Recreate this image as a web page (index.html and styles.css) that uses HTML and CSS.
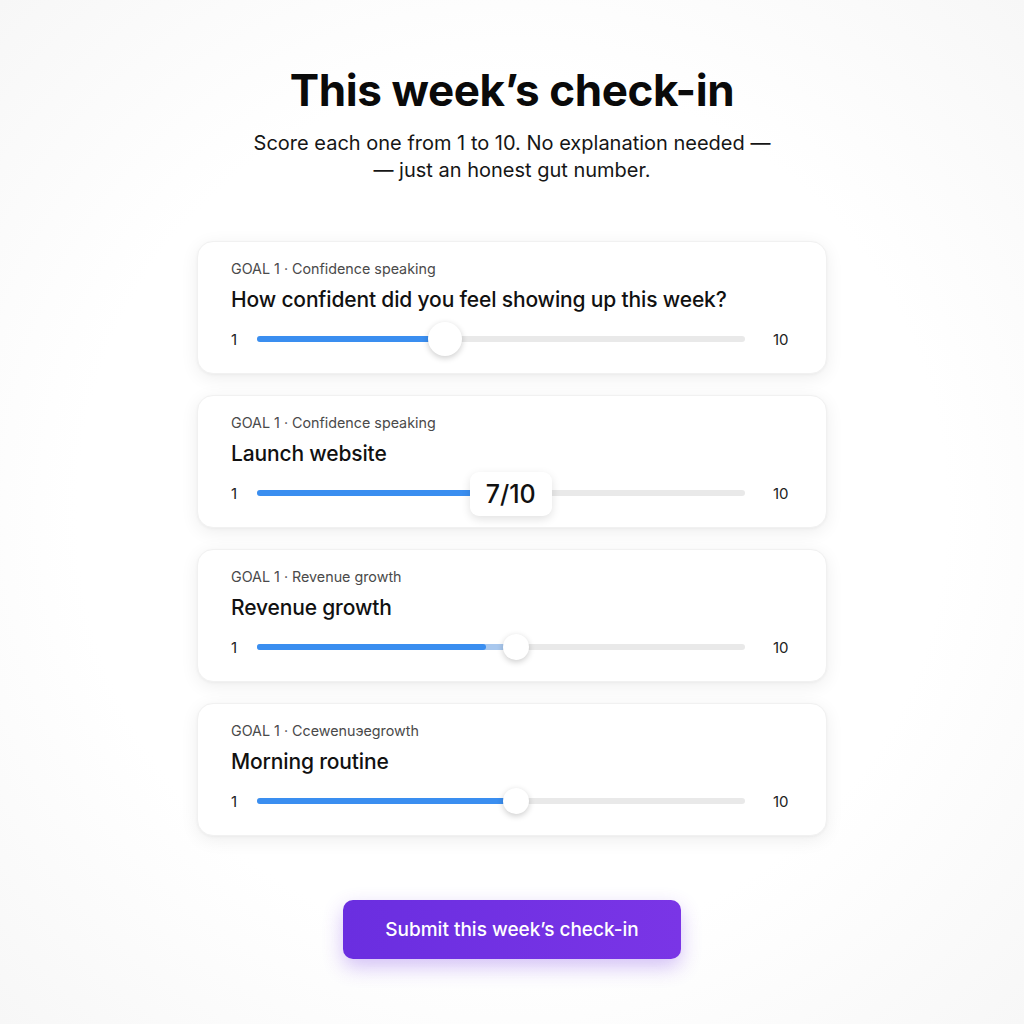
FILE: index.html
```html
<!DOCTYPE html>
<html lang="en">
<head>
    <meta charset="UTF-8">
    <meta name="viewport" content="width=device-width, initial-scale=1.0">
    <title>This week's check-in</title>
    <link rel="stylesheet" href="styles.css">
</head>
<body>
    <div class="page">
        <h1>This week’s check-in</h1>
        <p class="intro">Score each one from 1 to 10. No explanation needed —<br>— just an honest gut number.</p>

        <div class="goal-list">
            <div class="goal-card">
                <div class="goal-label">GOAL 1 · Confidence speaking</div>
                <div class="goal-title">How confident did you feel showing up this week?</div>
                <div class="slider-row">
                    <span class="slider-min">1</span>
                    <div class="track">
                        <div class="fill" style="width: 38.5%"></div>
                        <div class="thumb thumb-large" style="left: 38.5%"></div>
                    </div>
                    <span class="slider-max">10</span>
                </div>
            </div>

            <div class="goal-card">
                <div class="goal-label">GOAL 1 · Confidence speaking</div>
                <div class="goal-title">Launch website</div>
                <div class="slider-row">
                    <span class="slider-min">1</span>
                    <div class="track">
                        <div class="fill" style="width: 46%"></div>
                        <div class="value-bubble" style="left: 52%">7/10</div>
                    </div>
                    <span class="slider-max">10</span>
                </div>
            </div>

            <div class="goal-card">
                <div class="goal-label">GOAL 1 · Revenue growth</div>
                <div class="goal-title">Revenue growth</div>
                <div class="slider-row">
                    <span class="slider-min">1</span>
                    <div class="track">
                        <div class="fill fill-soft" style="width: 53%"></div>
                        <div class="fill" style="width: 47%"></div>
                        <div class="thumb" style="left: 53%"></div>
                    </div>
                    <span class="slider-max">10</span>
                </div>
            </div>

            <div class="goal-card">
                <div class="goal-label">GOAL 1 · Ccewenuэegrowth</div>
                <div class="goal-title">Morning routine</div>
                <div class="slider-row">
                    <span class="slider-min">1</span>
                    <div class="track">
                        <div class="fill" style="width: 53%"></div>
                        <div class="thumb" style="left: 53%"></div>
                    </div>
                    <span class="slider-max">10</span>
                </div>
            </div>
        </div>

        <button class="submit-btn">Submit this week’s check-in</button>
    </div>
</body>
</html>
```

FILE: styles.css
```css
body {
    margin: 0;
    font-family: Inter, "Noto Sans", sans-serif;
    color: #111;
    background-color: #fcfcfc;
    background-image: radial-gradient(ellipse at center, #ffffff 60%, #f7f7f7 100%);
    min-height: 100vh;
}
.page {
    width: 630px;
    margin: 0 auto;
    padding-top: 62px;
    display: flex;
    flex-direction: column;
    align-items: center;
}
h1 {
    margin: 0;
    font-size: 44px;
    line-height: 56px;
    font-weight: 700;
    letter-spacing: -0.4px;
    color: #0a0a0a;
}
.intro {
    margin: 12px 0 0;
    font-size: 20px;
    line-height: 27px;
    text-align: center;
    color: #161616;
    white-space: nowrap;
}
.goal-list {
    width: 100%;
    margin-top: 57px;
    display: flex;
    flex-direction: column;
    gap: 21px;
}
.goal-card {
    background-color: #fff;
    border-radius: 16px;
    padding: 18px 33px 17px 33px;
    box-shadow: 0 4px 18px rgba(0, 0, 0, 0.07), 0 1px 3px rgba(0, 0, 0, 0.04);
    border: 1px solid #f1f1f1;
}
.goal-label {
    font-size: 14.3px;
    line-height: 18px;
    color: #4a4a4a;
}
.goal-title {
    margin-top: 8px;
    font-size: 21px;
    line-height: 28px;
    font-weight: 500;
    letter-spacing: -0.15px;
    color: #111;
}
.slider-row {
    margin-top: 8px;
    height: 34px;
    display: flex;
    align-items: center;
}
.slider-min {
    width: 26px;
    font-size: 15px;
    color: #222;
}
.slider-max {
    width: 20px;
    margin-left: 28px;
    font-size: 15px;
    color: #222;
}
.track {
    position: relative;
    flex: 1;
    height: 6px;
    border-radius: 3px;
    background-color: #e9e9e9;
}
.fill {
    position: absolute;
    left: 0;
    top: 0;
    height: 100%;
    border-radius: 3px;
    background-color: #3a8ef0;
}
.fill-soft {
    background-color: #a9c8ee;
}
.thumb {
    position: absolute;
    top: 50%;
    width: 26px;
    height: 26px;
    border-radius: 50%;
    background-color: #fff;
    transform: translate(-50%, -50%);
    box-shadow: 0 2px 6px rgba(0, 0, 0, 0.2);
}
.thumb-large {
    width: 34px;
    height: 34px;
}
.value-bubble {
    position: absolute;
    top: 50%;
    width: 82px;
    height: 44px;
    transform: translate(-50%, -50%);
    margin-top: 1px;
    display: flex;
    align-items: center;
    justify-content: center;
    background-color: #fff;
    border-radius: 9px;
    box-shadow: 0 3px 10px rgba(0, 0, 0, 0.12);
    font-size: 25px;
    font-weight: 500;
    color: #111;
}
.submit-btn {
    margin-top: 64px;
    width: 338px;
    height: 59px;
    border: none;
    border-radius: 10px;
    background-image: linear-gradient(to right, #6a2ee0, #7a35e6);
    color: #fff;
    font-family: Inter, "Noto Sans", sans-serif;
    font-size: 19px;
    font-weight: 500;
    box-shadow: 0 8px 20px rgba(112, 50, 230, 0.3);
    cursor: pointer;
}
```
